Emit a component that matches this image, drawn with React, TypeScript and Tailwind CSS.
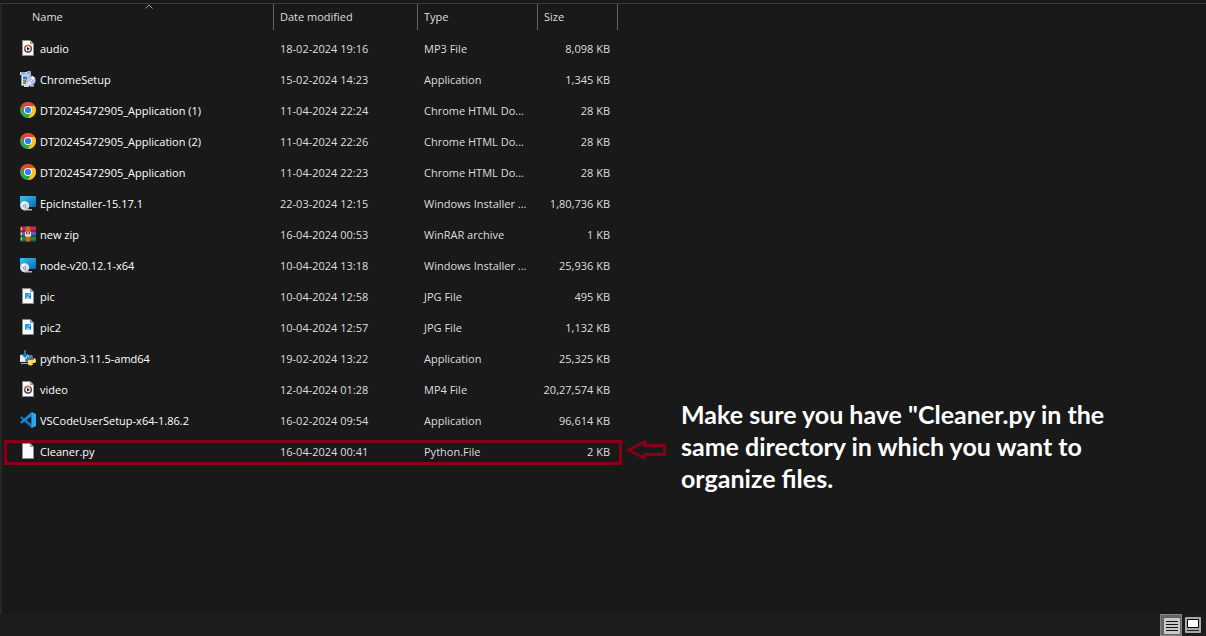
import React from "react";

type IconKind = "media" | "setup" | "chrome" | "msi" | "rar" | "picture" | "python" | "vscode" | "blank";

interface FileRow {
  name: string;
  date: string;
  type: string;
  size: string;
  icon: IconKind;
}

const files: FileRow[] = [
  { name: "audio", date: "18-02-2024 19:16", type: "MP3 File", size: "8,098 KB", icon: "media" },
  { name: "ChromeSetup", date: "15-02-2024 14:23", type: "Application", size: "1,345 KB", icon: "setup" },
  { name: "DT20245472905_Application (1)", date: "11-04-2024 22:24", type: "Chrome HTML Do...", size: "28 KB", icon: "chrome" },
  { name: "DT20245472905_Application (2)", date: "11-04-2024 22:26", type: "Chrome HTML Do...", size: "28 KB", icon: "chrome" },
  { name: "DT20245472905_Application", date: "11-04-2024 22:23", type: "Chrome HTML Do...", size: "28 KB", icon: "chrome" },
  { name: "EpicInstaller-15.17.1", date: "22-03-2024 12:15", type: "Windows Installer ...", size: "1,80,736 KB", icon: "msi" },
  { name: "new zip", date: "16-04-2024 00:53", type: "WinRAR archive", size: "1 KB", icon: "rar" },
  { name: "node-v20.12.1-x64", date: "10-04-2024 13:18", type: "Windows Installer ...", size: "25,936 KB", icon: "msi" },
  { name: "pic", date: "10-04-2024 12:58", type: "JPG File", size: "495 KB", icon: "picture" },
  { name: "pic2", date: "10-04-2024 12:57", type: "JPG File", size: "1,132 KB", icon: "picture" },
  { name: "python-3.11.5-amd64", date: "19-02-2024 13:22", type: "Application", size: "25,325 KB", icon: "python" },
  { name: "video", date: "12-04-2024 01:28", type: "MP4 File", size: "20,27,574 KB", icon: "media" },
  { name: "VSCodeUserSetup-x64-1.86.2", date: "16-02-2024 09:54", type: "Application", size: "96,614 KB", icon: "vscode" },
  { name: "Cleaner.py", date: "16-04-2024 00:41", type: "Python.File", size: "2 KB", icon: "blank" },
];

function Page() {
  return (
    <>
      <path d="M2.5 .5h8l3 3v12h-11z" fill="#fafafa" stroke="#8c8c8c" />
      <path d="M10.5 .5v3h3z" fill="#c4c4c4" stroke="#777" strokeWidth=".8" />
    </>
  );
}

function Drawing({ kind }: { kind: IconKind }) {
  switch (kind) {
    case "blank":
      return <Page />;
    case "media":
      return (
        <>
          <Page />
          <circle cx="8" cy="8.7" r="3.3" fill="#f6f0f0" stroke="#4a2c3c" strokeWidth="1.3" />
          <path d="M4.700 8.700A3.300 3.300 0 0 1 10.500 6.500" fill="none" stroke="#d9733f" strokeWidth="1.300" />
          <path d="M5.200 10.500a3.300 3.300 0 0 0 5 .6" fill="none" stroke="#6d4a80" strokeWidth="1.200" />
          <path d="M7 6.900l2.900 1.800L7 10.500z" fill="#16161c" />
        </>
      );
    case "picture":
      return (
        <>
          <Page />
          <path d="M5 5h6v6H5z" fill="#1e73cf" />
          <path d="M5 5h6v2L5 11z" fill="#3195e8" />
          <path d="M5 11l3-3 3 3z" fill="#8ed0ff" />
          <circle cx="9.3" cy="6.7" r=".8" fill="#e7f5ff" />
        </>
      );
    case "setup":
      return (
        <>
          <path d="M0 1h11v3H0z" fill="#c9d9ea" />
          <path d="M1 1h4v2H1zM7 0h4v3H7z" fill="#8fa9c5" />
          <path d="M1.5 4h9v10.5h-9z" fill="#e8edf3" stroke="#8a9cb5" strokeWidth=".7" />
          <path d="M3 5.5h4v3H3z" fill="#4272bd" />
          <path d="M3 9h3v4H3z" fill="#5ba45f" />
          <path d="M5 8.5l1 1v4H5z" fill="#c65d53" />
          <circle cx="11" cy="9.5" r="4.5" fill="#b8c5ee" stroke="#7889bf" strokeWidth=".7" />
          <path d="M11 9.5l4-2.2a4.4 4.4 0 0 0-3-2.2z" fill="#edf5ff" />
          <path d="M11 9.5L7 11.8a4.4 4.4 0 0 0 4 2.2z" fill="#dce6ff" />
          <circle cx="11" cy="9.5" r="1.2" fill="#f7f9ff" stroke="#7d8cbd" strokeWidth=".5" />
          <path d="M4 14h5v2H4zM10 14h4v1.5h-4z" fill="#d3d6db" />
        </>
      );
    case "chrome":
      return (
        <>
          <circle cx="8" cy="8" r="8" fill="#31a753" />
          <path d="M1.1 4A8 8 0 0 1 14.9 4H8L4.5 10z" fill="#e94235" />
          <path d="M14.9 4A8 8 0 0 1 8 16l3.5-6L8 4z" fill="#fcc31e" />
          <circle cx="8" cy="8" r="4" fill="#fff" />
          <circle cx="8" cy="8" r="3.1" fill="#2f7cec" />
        </>
      );
    case "msi":
      return (
        <>
          <linearGradient id="screen" x1="0" y1="0" x2="1" y2="1">
            <stop stopColor="#38c4e8" />
            <stop offset="1" stopColor="#0868b5" />
          </linearGradient>
          <path d="M0 1h16v11H0z" fill="url(#screen)" />
          <path d="M3 14h9v1.5H5z" fill="#aeb3b7" />
          <circle cx="4.7" cy="10.7" r="4.5" fill="#dfe4e7" />
          <path d="M4.7 10.7L1.2 8a4.5 4.5 0 0 1 3.5-1.8z" fill="#fff" />
          <path d="M4.7 10.7l3.8 2.5a4.5 4.5 0 0 1-3.8 2z" fill="#c1c8cd" />
          <circle cx="4.7" cy="10.7" r="1.7" fill="#6fa8c9" />
          <circle cx="4.7" cy="10.7" r=".7" fill="#f3fbff" />
        </>
      );
    case "rar":
      return (
        <>
          <path d="M0 .5h16v5H0z" fill="#c62b55" />
          <path d="M0 5.5h16v5H0z" fill="#6157b5" />
          <path d="M0 10.5h16v5H0z" fill="#188a3c" />
          <path d="M0 4.5h16v1H0zM0 9.5h16v1H0zM0 14.5h16v1H0z" fill="#233d3b" />
          <path d="M1 1.5h1v3H1zM1 6.5h1v3H1zM1 11.5h1v3H1z" fill="#f4cc55" />
          <path d="M6 .5h4v15H6z" fill="#dc641b" />
          <path d="M5 5.5h6v5H5z" fill="#eee5dc" />
          <path d="M6 5.5h4v3H6z" fill="#a13b22" />
          <path d="M7.5 6h1v4h-1z" fill="#fff" />
        </>
      );
    case "python":
      return (
        <>
          <path d="M0 5h12v7H0z" fill="#e4e8ec" />
          <path d="M1 13h8v1H1z" fill="#a2a7ad" />
          <path d="M4 0h2v4h3L5 8 1 4h3z" fill="#1476bc" />
          <path d="M7 9V7.5Q7 5 10 5t3 2.3V10H9.5Q7.5 10 7.5 12H7Q5 12 5 10t2-2z" fill="#3b77aa" />
          <path d="M8 14v-2q0-2 2-2h2q2 0 2-2h.5Q16 8.500 16 11t-2 2h-2v.5h1.500q-.5 2-2.800 2T8 14z" fill="#ffda55" />
          <circle cx="8.7" cy="6.8" r=".6" fill="#fff" />
        </>
      );
    case "vscode":
      return (
        <>
          <path d="M11.500 0L16 2v12l-4.500 2L1.200 6.800 0 5.600l1.500-1.400 10 7.600z" fill="#0877bd" />
          <path d="M11.500 4.200l-10 7.600L0 10.400l1.200-1.200L11.500 0z" fill="#138dd5" />
          <path d="M11.500 0L16 2v12l-4.500 2z" fill="#2aa7f1" />
        </>
      );
  }
}

function FileIcon({ kind }: { kind: IconKind }) {
  return (
    <svg viewBox="0 0 16 16" className="mb-px size-4 shrink-0" aria-hidden="true">
      <Drawing kind={kind} />
    </svg>
  );
}

const headClass = "border-r border-[#626262] p-0 font-normal";
const headButton = "flex h-[26px] w-full items-center pl-1.5 text-left";

export default function App() {
  return (
    <div className="flex min-h-screen flex-col bg-[#191919] pt-[3px] font-['Open_Sans','Noto_Sans',sans-serif] text-[11px] leading-4 text-[#dedede]">
      <main className="flex grow items-start border-t border-l-2 border-t-[#3b3b3b] border-l-[#272727]">
        <div className="relative shrink-0">
          <table className="w-[616px] table-fixed border-separate border-spacing-0">
            <colgroup>
              <col className="w-[272px]" />
              <col className="w-36" />
              <col className="w-[120px]" />
              <col className="w-20" />
            </colgroup>
            <thead>
              <tr>
                <th scope="col" aria-sort="ascending" className={headClass}>
                  <button type="button" className="relative flex h-[26px] w-full items-center pl-[30px] text-left">
                    Name
                    <svg viewBox="0 0 8 5" className="absolute top-0 left-[143px] h-[5px] w-2" aria-hidden="true">
                      <path d="M.5 4.5L4 1l3.5 3.5" fill="none" stroke="#a0a0a0" />
                    </svg>
                  </button>
                </th>
                <th scope="col" className={headClass}>
                  <button type="button" className={headButton}>Date modified</button>
                </th>
                <th scope="col" className={headClass}>
                  <button type="button" className={headButton}>Type</button>
                </th>
                <th scope="col" className={headClass}>
                  <button type="button" className={headButton}>Size</button>
                </th>
              </tr>
              <tr aria-hidden="true">
                <td colSpan={4} className="h-[3px] p-0" />
              </tr>
            </thead>
            <tbody>
              {files.map((file) => (
                <tr key={file.name} className="h-[31px] whitespace-nowrap">
                  <td className="p-0 pl-[18px] text-white">
                    <div className="flex items-center gap-1">
                      <FileIcon kind={file.icon} />
                      <span>{file.name}</span>
                    </div>
                  </td>
                  <td className="p-0 pl-1.5">{file.date}</td>
                  <td className="p-0 pl-1.5">{file.type}</td>
                  <td className="p-0 pr-2 text-right">{file.size}</td>
                </tr>
              ))}
            </tbody>
          </table>
          <div className="pointer-events-none absolute -right-1 bottom-0.5 left-0.5 h-[25px] border-3 border-[#880015]" />
        </div>
        <aside className="mt-[394px] ml-2 flex items-start gap-[15px]">
          <svg viewBox="0 0 40 22" className="mt-[41px] h-[22px] w-10 shrink-0" aria-hidden="true">
            <path d="M2.500 11L18.500 2.800V6.500H38.500V15.500H18.500V19.200z" fill="none" stroke="#880015" strokeWidth="2.800" />
          </svg>
          <p className="font-['Lato',sans-serif] text-[25px] leading-8 font-bold text-white">
            <span className="block">Make sure you have "Cleaner.py in the</span>
            <span className="block">same directory in which you want to</span>
            <span className="block">organize files.</span>
          </p>
        </aside>
      </main>
      <footer className="flex h-[22px] shrink-0 justify-end bg-[#1c1c1c] pr-0.5">
        <button type="button" aria-label="Details" className="flex h-[22px] w-[22px] items-center justify-center border border-[#858585] bg-[#666666] pt-0.5 pl-0.5">
          <svg viewBox="0 0 16 16" className="size-4" aria-hidden="true">
            <rect width="16" height="16" rx="1" fill="#c8c8c8" />
            <path d="M2 3.500h12M2 6.500h12M2 9.500h12M2 12.500h12" stroke="#111" />
          </svg>
        </button>
        <button type="button" aria-label="Large thumbnails" className="flex h-[22px] w-[22px] items-center justify-center">
          <svg viewBox="0 0 16 16" className="size-4" aria-hidden="true">
            <rect width="16" height="16" rx="1" fill="#a9a9a9" />
            <path d="M2.500 2.500h11v8h-11z" fill="#fff" stroke="#000" />
            <path d="M2 13.500h12" stroke="#222" />
          </svg>
        </button>
      </footer>
    </div>
  );
}
